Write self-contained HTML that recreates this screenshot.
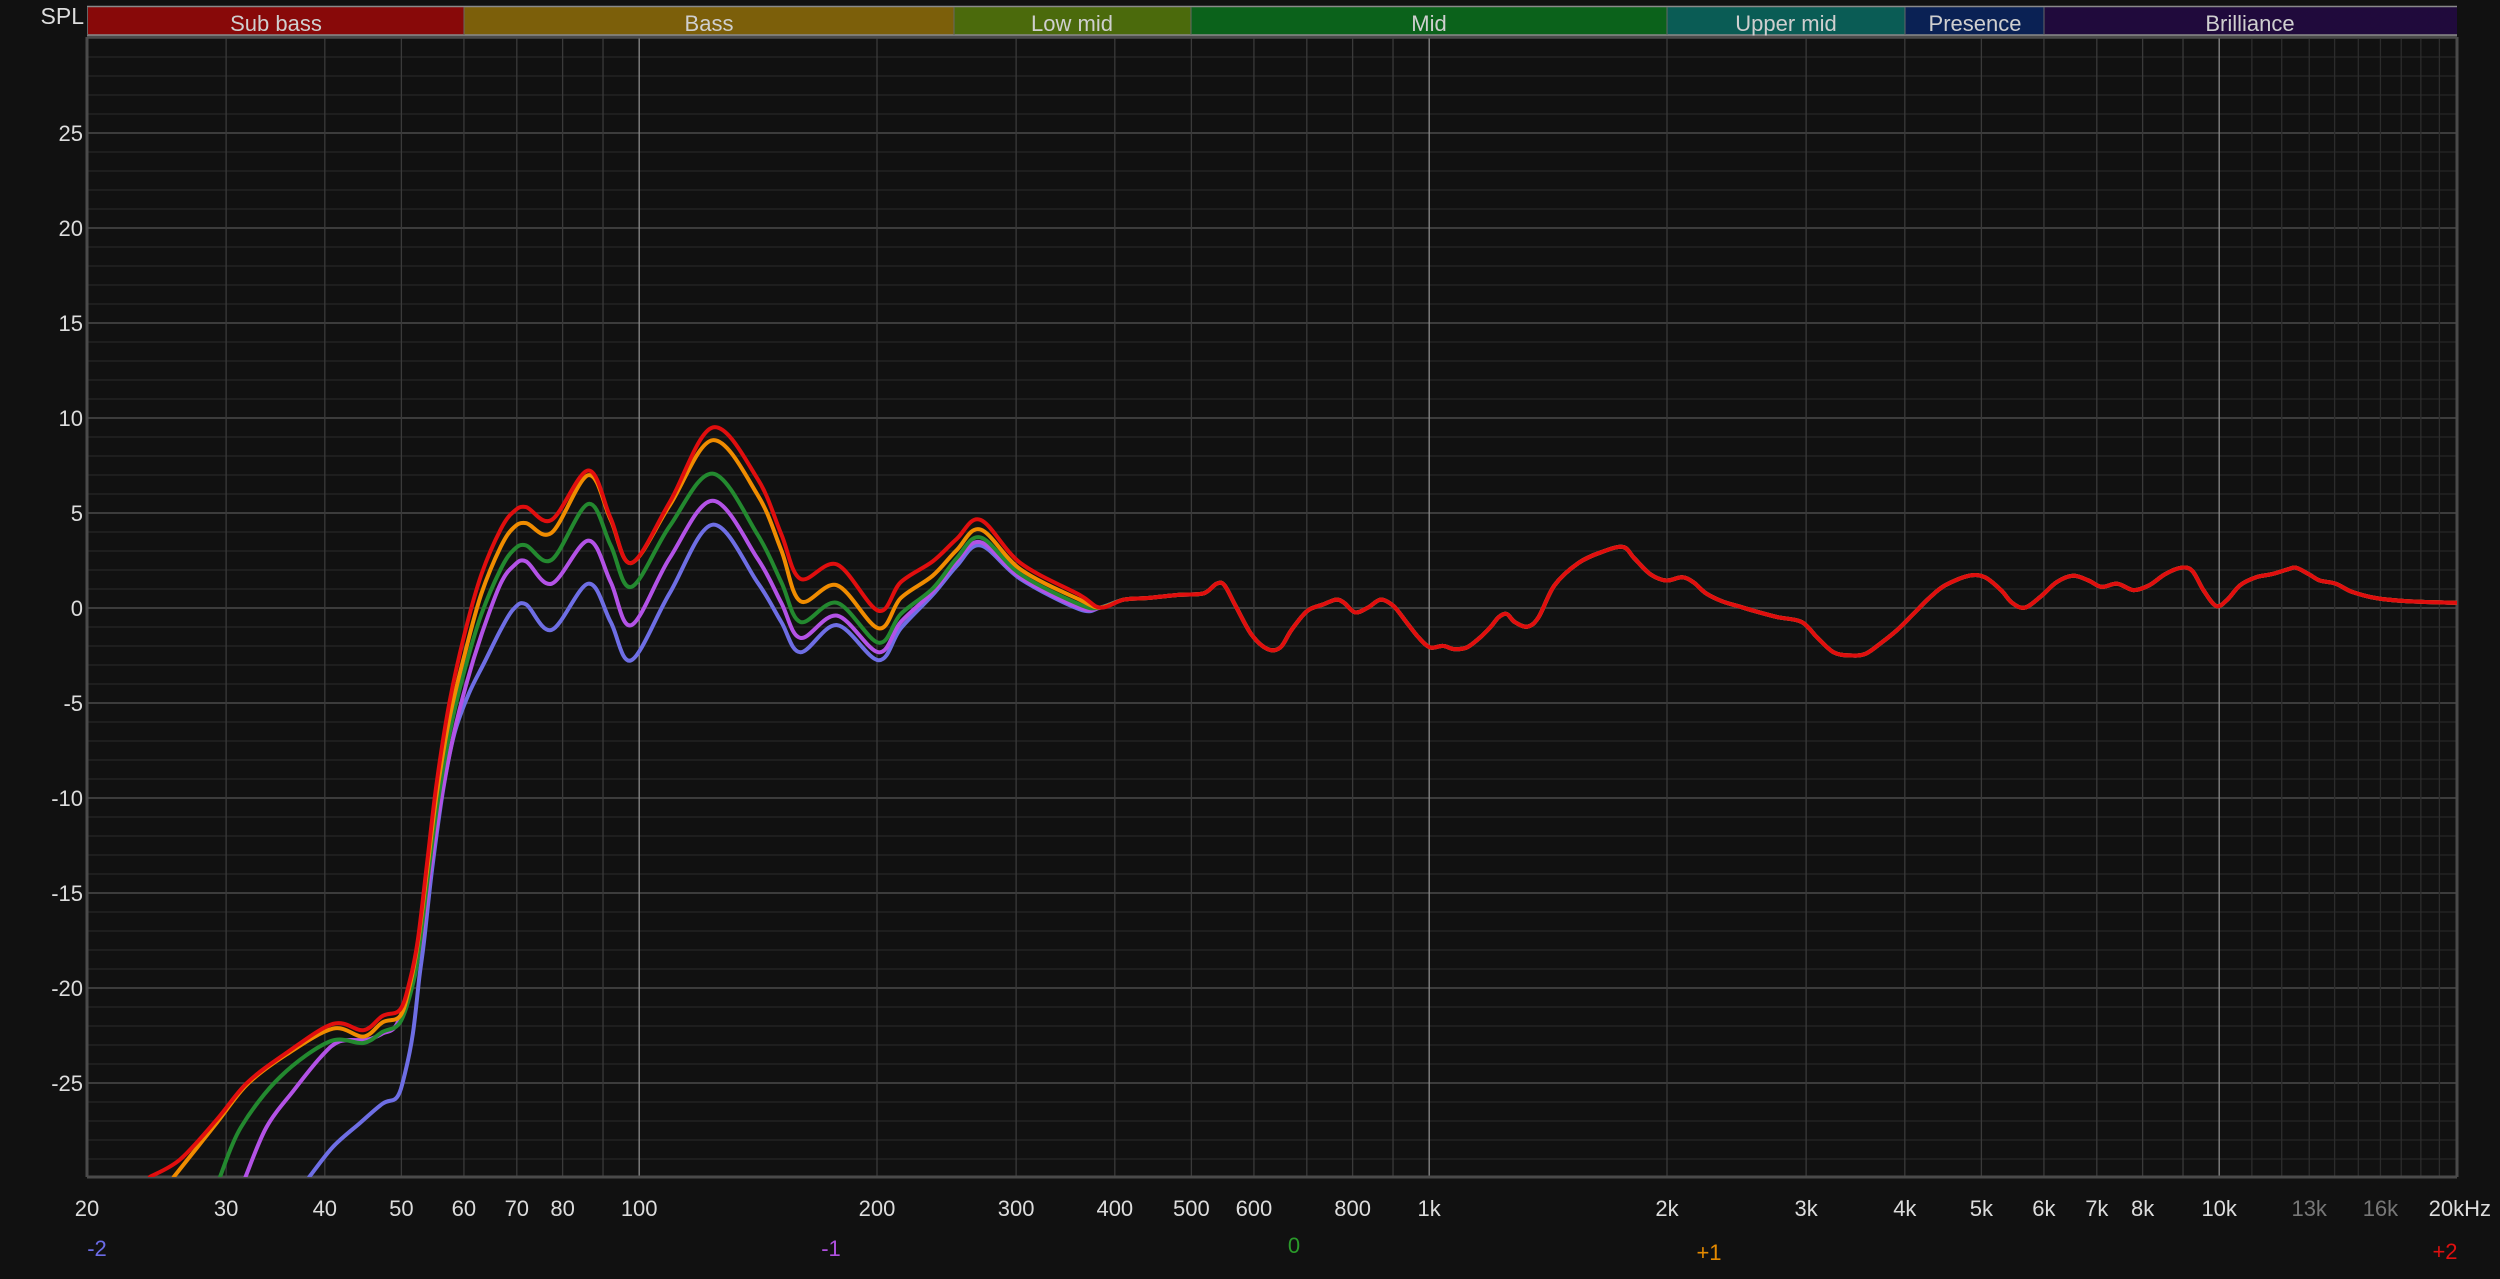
<!DOCTYPE html>
<html><head><meta charset="utf-8"><style>
html,body{margin:0;padding:0;background:#111;}
svg{display:block;}
text{font-family:"Liberation Sans",sans-serif;}
</style></head><body>
<svg id="s" width="2500" height="1279" viewBox="0 0 2500 1279" xmlns="http://www.w3.org/2000/svg">
<rect width="2500" height="1279" fill="#111"/>
<g id="grid"></g>
<g id="bands">
<rect x="87" y="7" width="377" height="28" fill="#880909"/>
<rect x="464" y="7" width="490" height="28" fill="#7c5f0a"/>
<rect x="954" y="7" width="237" height="28" fill="#4b6a0c"/>
<rect x="1191" y="7" width="476" height="28" fill="#0b621b"/>
<rect x="1667" y="7" width="238" height="28" fill="#0a5c55"/>
<rect x="1905" y="7" width="139" height="28" fill="#0a2154"/>
<rect x="2044" y="7" width="413" height="28" fill="#200a3c"/>
<line x1="87" y1="6.5" x2="2457" y2="6.5" stroke="#8a8a8a" stroke-width="1.5"/>
<line x1="87" y1="35" x2="2457" y2="35" stroke="#8a8a8a" stroke-width="1.5"/>
<g stroke="#666" stroke-width="1"><line x1="87.5" y1="7" x2="87.5" y2="35"/><line x1="464" y1="7" x2="464" y2="35"/><line x1="954" y1="7" x2="954" y2="35"/><line x1="1191" y1="7" x2="1191" y2="35"/><line x1="1667" y1="7" x2="1667" y2="35"/><line x1="1905" y1="7" x2="1905" y2="35"/><line x1="2044" y1="7" x2="2044" y2="35"/></g>
<g fill="#cfcfcf" font-size="22" text-anchor="middle">
<text x="276" y="31">Sub bass</text><text x="709" y="31">Bass</text><text x="1072" y="31">Low mid</text><text x="1429" y="31">Mid</text><text x="1786" y="31">Upper mid</text><text x="1975" y="31">Presence</text><text x="2250" y="31">Brilliance</text>
</g>
</g>
<text x="84" y="24" fill="#ddd" font-size="23" text-anchor="end">SPL</text>
<g id="ylab" fill="#ddd" font-size="22" text-anchor="end"></g>
<g id="xlab" font-size="22" text-anchor="middle"></g>
<g id="curves" fill="none" stroke-width="4" stroke-linejoin="round" stroke-linecap="round"></g>
<g font-size="22" text-anchor="middle">
<text x="97" y="1256" fill="#6b6be6">-2</text>
<text x="831" y="1256" fill="#b050e0">-1</text>
<text x="1294" y="1253" fill="#2a9a2a">0</text>
<text x="1709" y="1260" fill="#e58a00">+1</text>
<text x="2445" y="1259" fill="#e01010">+2</text>
</g>
</svg>
<script>
var NS="http://www.w3.org/2000/svg";
function el(t,a,p,txt){var e=document.createElementNS(NS,t);for(var k in a)e.setAttribute(k,a[k]);if(txt!=null)e.textContent=txt;document.getElementById(p).appendChild(e);return e;}
var L=87,R=2457,T=37,B=1177;
function fx(f){return L+790*Math.log10(f/20);}
function fy(d){return 608-19*d;}
for(var d=-30;d<=30;d++){var y=fy(d);if(y<T||y>B)continue;
 el('line',{x1:L,x2:R,y1:y,y2:y,stroke:(d%5==0)?'#4a4a4a':'#262626','stroke-width':(d%5==0)?1.5:1.2},'grid');}
var fs=[];
for(var f=30;f<100;f+=10)fs.push([f,'#3a3a3a']);
fs.push([100,'#8a8a8a']);
for(var f=200;f<1000;f+=100)fs.push([f,'#3a3a3a']);
fs.push([1000,'#8a8a8a']);
for(var f=2000;f<10000;f+=1000)fs.push([f,'#3a3a3a']);
fs.push([10000,'#8a8a8a']);
for(var f=11000;f<20000;f+=1000)fs.push([f,'#2c2c2c']);
fs.forEach(function(a){var x=fx(a[0]);el('line',{x1:x,x2:x,y1:T,y2:B,stroke:a[1],'stroke-width':1.3},'grid');});
el('line',{x1:L,x2:R,y1:T,y2:T,stroke:'#4a4a4a','stroke-width':3},'grid');
el('line',{x1:L,x2:R,y1:B,y2:B,stroke:'#4a4a4a','stroke-width':3},'grid');
el('line',{x1:L,x2:L,y1:T,y2:B,stroke:'#4a4a4a','stroke-width':3},'grid');
el('line',{x1:R,x2:R,y1:T,y2:B,stroke:'#4a4a4a','stroke-width':3},'grid');
for(var d=-25;d<=25;d+=5)el('text',{x:83,y:fy(d)+8},'ylab',String(d));
[[20,'20'],[30,'30'],[40,'40'],[50,'50'],[60,'60'],[70,'70'],[80,'80'],[100,'100'],[200,'200'],[300,'300'],[400,'400'],[500,'500'],[600,'600'],[800,'800'],[1000,'1k'],[2000,'2k'],[3000,'3k'],[4000,'4k'],[5000,'5k'],[6000,'6k'],[7000,'7k'],[8000,'8k'],[10000,'10k'],[13000,'13k',1],[16000,'16k',1]].forEach(function(a){
 el('text',{x:fx(a[0]),y:1216,fill:a[2]?'#777':'#ddd'},'xlab',a[1]);});
el('text',{x:2491,y:1216,fill:'#ddd','text-anchor':'end'},'xlab','20kHz');
var common=[[690,381],[705,376],[720,375],[740,373],[755,372],[763,366],[768,367],[775,380],[785,398],[795,407],[803,406],[810,395],[820,383],[830,379],[838,376],[843,378],[850,384],[858,381],[866,376],[874,380],[882,390],[890,400],[897,406],[905,405],[912,407],[920,406],[928,400],[935,393],[940,387],[945,385],[950,390],[958,393],[965,387],[975,367],[990,353],[1005,346],[1018,343],[1025,350],[1035,360],[1045,364],[1055,362],[1062,365],[1070,372],[1080,377],[1090,380],[1100,383],[1115,387],[1130,390],[1140,400],[1150,409],[1160,411],[1170,410],[1180,403],[1190,395],[1200,385],[1210,375],[1220,367],[1235,361],[1245,362],[1255,370],[1262,378],[1270,381],[1280,374],[1290,365],[1300,361],[1310,364],[1318,368],[1328,366],[1338,370],[1348,367],[1358,360],[1368,356],[1375,358],[1382,370],[1390,380],[1397,376],[1405,367],[1415,362],[1425,360],[1435,357],[1440,356],[1448,360],[1455,364],[1465,366],[1475,371],[1490,375],[1510,377],[1541,378]];
var xs=[330,346,369,383,396,420,447,475,490,502,525,551,565,585,600,615,640,677];
var ys={
 red:[318,326,295,325,353,315,268,300,335,363,354,383,365,352,338,326,353,373],
 org:[328,334,298,326,353,317,276,310,345,377,367,394,375,361,345,332,357,376],
 grn:[342,351,316,342,368,330,297,335,365,390,378,403,385,369,350,337,360,379],
 pur:[352,366,339,365,392,350,314,350,378,400,386,409,390,371,352,340,362,381],
 blu:[379,395,366,390,414,372,329,365,390,409,392,414,394,373,355,342,363,382]};
var low={
 red:[[94,738],[113,727],[136,702],[155,679],[180,660],[209,642],[228,646],[240,637],[251,633],[257,615],[262,590],[268,540],[274,490],[282,440],[292,395],[302,360],[314,332],[322,321]],
 org:[[109,738],[136,704],[155,680],[180,661],[209,645],[228,650],[240,641],[251,637],[257,618],[262,592],[268,545],[274,497],[282,450],[292,408],[302,372],[314,343],[322,331]],
 grn:[[138,738],[151,707],[176,675],[207,653],[228,654],[240,647],[251,641],[259,617],[263,594],[269,545],[275,500],[283,455],[292,418],[302,385],[314,357],[322,345]],
 pur:[[154,738],[167,707],[184,684],[201,663],[213,653],[230,652],[240,648],[249,642],[259,613],[264,590],[270,545],[276,505],[284,463],[293,427],[303,395],[314,366],[322,355]],
 blu:[[194,738],[209,719],[226,704],[240,692],[249,688],[254,673],[259,648],[263,613],[266,590],[271,545],[278,495],[285,460],[294,435],[304,415],[314,395],[322,382]]};
var cols={blu:'#6e6ee4',pur:'#b352e6',grn:'#23892f',org:'#f08c00',red:'#e00e0e'};
var sx=2500/1568,sy=1279/802;
function path(pts){
 var p=pts.map(function(a){return [a[0]*sx,a[1]*sy];});
 var d='M'+p[0][0].toFixed(1)+' '+p[0][1].toFixed(1);
 for(var i=0;i<p.length-1;i++){
  var p0=p[i-1]||p[i],p1=p[i],p2=p[i+1],p3=p[i+2]||p2;
  var c1=[p1[0]+(p2[0]-p0[0])/6,p1[1]+(p2[1]-p0[1])/6],c2=[p2[0]-(p3[0]-p1[0])/6,p2[1]-(p3[1]-p1[1])/6];
  d+='C'+c1[0].toFixed(1)+' '+c1[1].toFixed(1)+' '+c2[0].toFixed(1)+' '+c2[1].toFixed(1)+' '+p2[0].toFixed(1)+' '+p2[1].toFixed(1);
 }
 return d;}
['blu','pur','grn','org','red'].forEach(function(k){
 var pts=low[k].slice();
 xs.forEach(function(x,i){pts.push([x,ys[k][i]]);});
 pts=pts.concat(common);
 var g=document.getElementById('curves');
 var e=document.createElementNS(NS,'path');e.setAttribute('d',path(pts));e.setAttribute('stroke',cols[k]);
 g.appendChild(e);
});
var cp=document.createElementNS(NS,'clipPath');cp.id='c';var r=document.createElementNS(NS,'rect');
r.setAttribute('x',L);r.setAttribute('y',T);r.setAttribute('width',R-L);r.setAttribute('height',B-T);cp.appendChild(r);
document.getElementById('s').appendChild(cp);document.getElementById('curves').setAttribute('clip-path','url(#c)');
</script>
</body></html>
